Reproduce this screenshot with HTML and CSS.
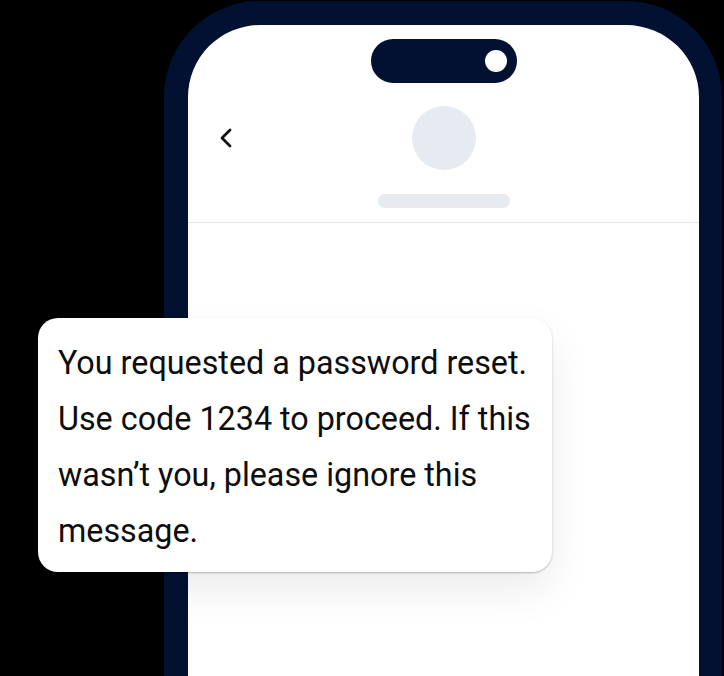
FILE: index.html
```html
<!DOCTYPE html>
<html>
<head>
<meta charset="utf-8">
<link rel="stylesheet" href="styles.css">
</head>
<body>
<div class="stage">
  <div class="phone">
    <div class="island"><span class="lens"></span></div>
    <div class="header">
      <div class="back">
        <svg width="14" height="22" viewBox="0 0 14 22"><path d="M12 3 L4 11 L12 19" fill="none" stroke="#111" stroke-width="2.8" stroke-linecap="round" stroke-linejoin="round"/></svg>
      </div>
      <div class="contact">
        <div class="avatar"></div>
        <div class="name"></div>
      </div>
      <div></div>
    </div>
    <div class="divider"></div>
  </div>
  <div class="bubble">
    <p class="line">You requested a password reset.</p>
    <p class="line">Use code 1234 to proceed. If this</p>
    <p class="line">wasn’t you, please ignore this</p>
    <p class="line">message.</p>
  </div>
</div>
</body>
</html>
```
FILE: styles.css
```css
html, body {
  margin: 0;
  padding: 0;
  background: #000;
}
.stage {
  position: relative;
  width: 724px;
  height: 676px;
  overflow: hidden;
  background: #000;
  font-family: Roboto, "Liberation Sans", sans-serif;
}
.phone {
  margin-left: 164px;
  margin-top: 1px;
  width: 511px;
  height: 900px;
  border: 24px solid #021131;
  border-right-width: 23px;
  border-radius: 96px;
  background: #fff;
  display: flex;
  flex-direction: column;
}
.island {
  align-self: center;
  margin-top: 14px;
  width: 146px;
  height: 44px;
  border-radius: 22px;
  background: #021131;
  display: flex;
  align-items: center;
  justify-content: flex-end;
  padding-right: 10px;
  box-sizing: border-box;
}
.lens {
  width: 22px;
  height: 22px;
  border-radius: 50%;
  background: #fff;
}
.header {
  display: grid;
  grid-template-columns: 1fr auto 1fr;
  margin-top: 23px;
}
.back {
  align-self: start;
  margin-top: 21px;
  padding-left: 30px;
  height: 22px;
}
.back svg { display: block; }
.contact {
  display: flex;
  flex-direction: column;
  align-items: center;
  gap: 24px;
}
.avatar {
  width: 64px;
  height: 64px;
  border-radius: 50%;
  background: #e6eaf1;
}
.name {
  width: 132px;
  height: 14px;
  border-radius: 7px;
  background: #e6eaf1;
}
.divider {
  margin-top: 14px;
  height: 1px;
  background: #e3e5ea;
}
.bubble {
  position: absolute;
  left: 38px;
  top: 318px;
  width: 514px;
  box-sizing: border-box;
  padding: 17px 20px 13px;
  background: #fff;
  border-radius: 20px;
  box-shadow: 0 1px 2px rgba(0,0,0,0.25), 0 18px 40px rgba(0,0,0,0.08);
}
.line {
  margin: 0;
  font-size: 32.3px;
  line-height: 56px;
  color: #0d0d0d;
  white-space: nowrap;
}
```
